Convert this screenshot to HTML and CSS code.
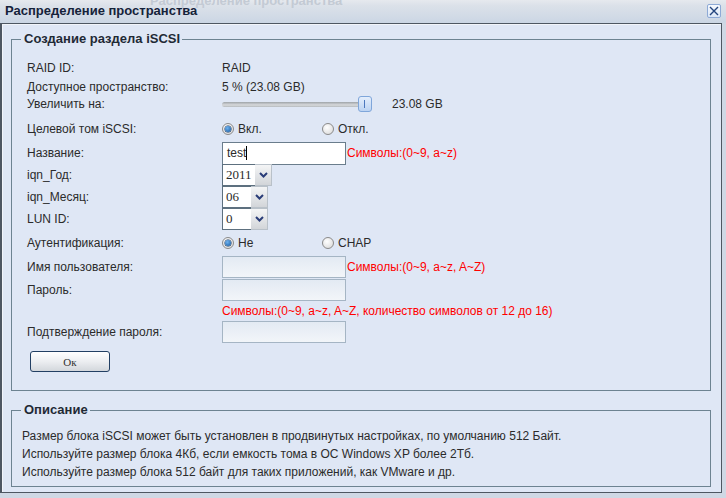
FILE: index.html
```html
<!DOCTYPE html>
<html lang="ru">
<head>
<meta charset="utf-8">
<title>Распределение пространства</title>
<link rel="stylesheet" href="styles.css">
</head>
<body>
<div class="window">
  <div class="titlebar">
    <span class="ghost">Распределение пространства</span>
    <span class="title">Распределение пространства</span>
    <span class="close"><svg width="10" height="10" viewBox="0 0 10 10"><path d="M1 1L9 9M9 1L1 9" stroke="#24457e" stroke-width="1.4" fill="none"/></svg></span>
  </div>
  <div class="panel">
    <fieldset class="group main">
      <legend>Создание раздела iSCSI</legend>
      <div class="form">
        <div class="row r1"><span class="label">RAID ID:</span><span>RAID</span></div>
        <div class="row r2"><span class="label">Доступное пространство:</span><span>5 % (23.08 GB)</span></div>
        <div class="row r3"><span class="label">Увеличить на:</span>
          <span class="slider"><span class="track"></span><span class="thumb"></span></span>
          <span class="size">23.08 GB</span></div>
        <div class="row r4"><span class="label">Целевой том iSCSI:</span>
          <span class="opt"><span class="radio on"></span>Вкл.</span>
          <span class="opt"><span class="radio"></span>Откл.</span></div>
        <div class="row r5"><span class="label">Название:</span>
          <span class="input filled">test<span class="caret"></span></span><span class="hint">Символы:(0~9, a~z)</span></div>
        <div class="row r6"><span class="label">iqn_Год:</span>
          <span class="select"><span class="sbox w33">2011</span><span class="sbtn"><svg width="9" height="6" viewBox="0 0 9 6"><path d="M1 1L4.5 4.5L8 1" stroke="#2a3d78" stroke-width="2" fill="none"/></svg></span></span></div>
        <div class="row r7"><span class="label">iqn_Месяц:</span>
          <span class="select"><span class="sbox w29">06</span><span class="sbtn"><svg width="9" height="6" viewBox="0 0 9 6"><path d="M1 1L4.5 4.5L8 1" stroke="#2a3d78" stroke-width="2" fill="none"/></svg></span></span></div>
        <div class="row r8"><span class="label">LUN ID:</span>
          <span class="select"><span class="sbox w29">0</span><span class="sbtn"><svg width="9" height="6" viewBox="0 0 9 6"><path d="M1 1L4.5 4.5L8 1" stroke="#2a3d78" stroke-width="2" fill="none"/></svg></span></span></div>
        <div class="row r9"><span class="label">Аутентификация:</span>
          <span class="opt"><span class="radio on"></span>Не</span>
          <span class="opt"><span class="radio"></span>CHAP</span></div>
        <div class="row r10"><span class="label">Имя пользователя:</span>
          <span class="input empty"></span><span class="hint">Символы:(0~9, a~z, A~Z)</span></div>
        <div class="row r11"><span class="label">Пароль:</span><span class="input empty"></span></div>
        <div class="row r12"><span class="label"></span><span class="hint flush">Символы:(0~9, a~z, A~Z, количество символов от 12 до 16)</span></div>
        <div class="row r13"><span class="label">Подтверждение пароля:</span><span class="input empty"></span></div>
        <div class="actions"><span class="btn">Ок</span></div>
      </div>
    </fieldset>
    <fieldset class="group desc">
      <legend>Описание</legend>
      <div class="text">
        <p>Размер блока iSCSI может быть установлен в продвинутых настройках, по умолчанию 512 Байт.</p>
        <p>Используйте размер блока 4Кб, если емкость тома в ОС Windows XP более 2Тб.</p>
        <p>Используйте размер блока 512 байт для таких приложений, как VMware и др.</p>
      </div>
    </fieldset>
  </div>
</div>
</body>
</html>
```
FILE: styles.css
```css
* { box-sizing: border-box; }
html, body { margin: 0; padding: 0; }
body {
  width: 726px; height: 498px; overflow: hidden;
  background: #cfd8e4;
  font-family: "Liberation Sans", Arial, sans-serif;
  font-size: 12px; color: #2b2b2b;
}
.window { width: 726px; height: 498px; position: relative; }
.titlebar {
  height: 23px; position: relative;
  display: flex; justify-content: space-between; align-items: flex-start;
  padding: 0 5px 0 5px;
  background: linear-gradient(#e6e9ee 0, #dbe1e9 25%, #cbd6e4 100%);
}
.ghost {
  position: absolute; left: 150px; top: -7px;
  font-weight: bold; font-size: 13px; color: #c3cad4;
}
.title {
  position: relative; font-weight: bold; font-size: 13px; color: #15223a;
  line-height: 23px; margin-top: -1px;
}
.close {
  width: 14px; height: 14px; margin-top: 4px;
  border: 1px solid #8eaad6; border-radius: 2px;
  background: linear-gradient(#f6f9fe, #dbe6f6);
  display: flex; align-items: center; justify-content: center;
}
.panel {
  width: 722px; height: 470px;
  border: 1px solid #4e5762; border-left-width: 2px;
  background: #dfe7f5;
  padding: 7px 10px 0 9px;
  box-shadow: inset 1px 1px 0 #f2f5fa;
}
.group {
  margin: 0; padding: 0;
  border: 1px solid #6d8391;
}
.group legend {
  font-weight: bold; font-size: 13px; line-height: 16px; color: #1f2a35;
  padding: 0 2px 0 3px; margin-left: 9px;
}
.form { padding: 11px 0 18px 15px; }
.row { display: flex; align-items: center; }
.label { width: 195px; flex: none; }
.r1 { height: 20px; }
.r2 { height: 18px; }
.r3 { height: 16px; }
.r4 { height: 30px; padding-top: 4px; }
.r5, .r6, .r7, .r8, .r10 { height: 22px; }
.r9 { height: 26px; }
.r11 { height: 23px; }
.r12 { height: 20px; }
.r13 { height: 22px; }
.slider { display: flex; align-items: center; width: 150px; }
.track {
  width: 138px; height: 5px; margin-right: -2px;
  border-radius: 3px;
  background: linear-gradient(#9ea3a8, #d8dadc 60%, #b5b9bd);
}
.thumb {
  position: relative; width: 14px; height: 16px;
  border: 1px solid #7fa6da; border-radius: 3px;
  background: linear-gradient(#e4eefc, #bcd3f2);
}
.thumb::after {
  content: ""; position: absolute; left: 5px; top: 3px;
  width: 1px; height: 8px; background: #4c78be;
}
.size { margin-left: 20px; }
.opt { width: 100px; display: flex; align-items: center; }
.radio {
  width: 12px; height: 12px; border-radius: 50%;
  border: 1px solid #8a8a8a; margin-right: 4px;
  background: radial-gradient(circle at 40% 35%, #ffffff, #d6d6d6);
  position: relative;
}
.radio.on::after {
  content: ""; position: absolute; left: 2px; top: 2px;
  width: 6px; height: 6px; border-radius: 50%;
  background: radial-gradient(circle at 40% 35%, #6fb2ef, #11579f);
  box-shadow: 0 0 0 0.5px #0c2b55;
}
.input {
  width: 124px; height: 22px; display: flex; align-items: center;
  padding-left: 4px;
}
.filled { border: 1px solid #6a7d8c; background: #fff; height: 23px; }
.empty { border: 1px solid #a5b5c4; background: linear-gradient(#e3eaf3, #f2f5f9); }
.caret { width: 1px; height: 14px; background: #000; margin-left: 0; }
.hint { color: #ff0000; margin-left: 1px; }
.hint.flush { margin-left: 0; }
.select { display: flex; height: 22px; }
.sbox {
  border: 1px solid #5d707f; background: #fff;
  font-family: "Liberation Serif", "Times New Roman", serif; font-size: 13px;
  display: flex; align-items: center; padding-left: 3px; height: 22px;
}
.w33 { width: 34px; }
.w29 { width: 30px; }
.sbtn {
  width: 17px; height: 22px; margin-left: -1px;
  border: 1px solid #b9c1c9; border-left: none;
  background: linear-gradient(#f4f5f6, #d2d5d9);
  display: flex; align-items: center; justify-content: center;
}
.actions { padding: 8px 0 0 3px; }
.btn {
  display: flex; align-items: center; justify-content: center;
  width: 80px; height: 21px;
  border: 1px solid #223f63; border-radius: 3px;
  background: linear-gradient(#ffffff, #eceef1 50%, #d3d7dc);
  font-family: "Liberation Serif", "Times New Roman", serif; font-size: 11px; color: #333;
}
.desc { margin-top: 11px; }
.text { padding: 9px 0 5px 10px; }
.text p { margin: 0; line-height: 18px; }
```
